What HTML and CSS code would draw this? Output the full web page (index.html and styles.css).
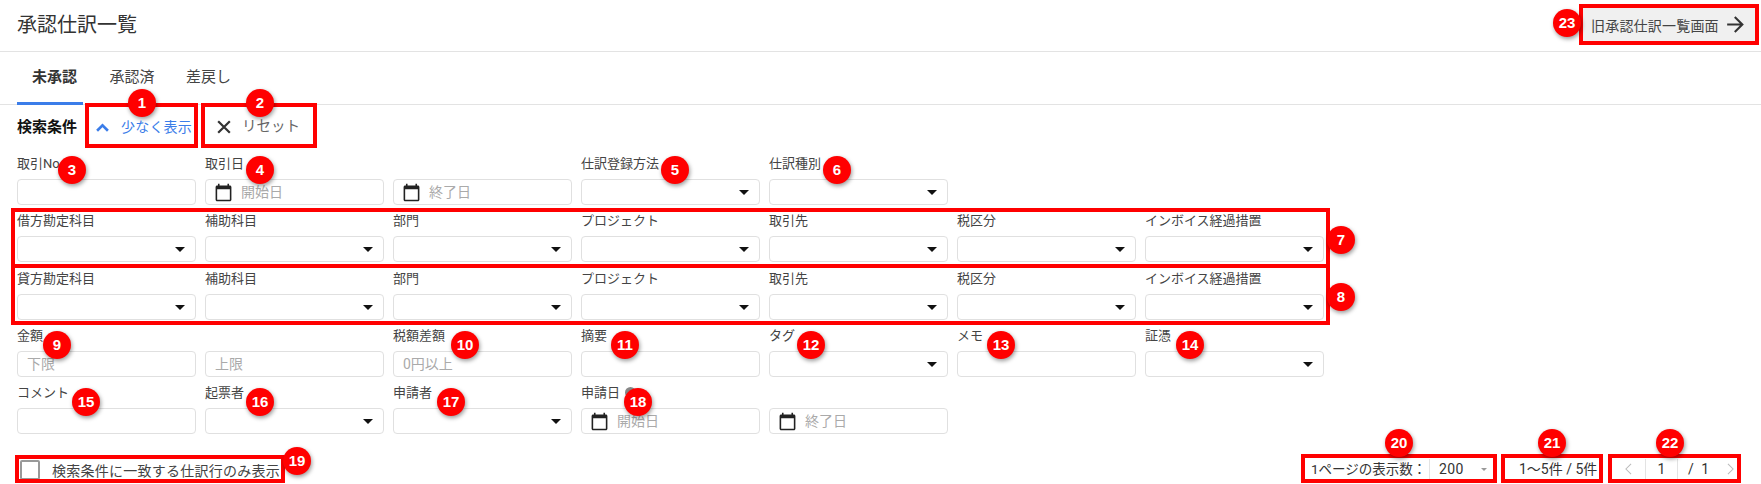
FILE: index.html
```html
<!DOCTYPE html>
<html lang="ja">
<head>
<meta charset="utf-8">
<title>承認仕訳一覧</title>
<link rel="stylesheet" href="styles.css">
</head>
<body>
<div class="page">
  <header class="top">
    <h1>承認仕訳一覧</h1>
    <button class="old-link">旧承認仕訳一覧画面
      <svg class="arrow" viewBox="0 0 24 24"><path d="M12 4l-1.41 1.41L16.17 11H4v2h12.17l-5.58 5.59L12 20l8-8z"/></svg>
    </button>
  </header>
  <nav class="tabs">
    <a class="tab active">未承認</a>
    <a class="tab">承認済</a>
    <a class="tab">差戻し</a>
  </nav>
  <div class="search-bar">
    <strong class="search-title">検索条件</strong>
    <a class="less"><svg class="chev" viewBox="0 0 12 8"><path d="M1 7l5-5 5 5" /></svg>少なく表示</a>
    <a class="reset"><svg class="cross" viewBox="0 0 12 12"><path d="M1 1l10 10M11 1L1 11" /></svg>リセット</a>
  </div>
  <div class="fields">
    <div class="field"><label>取引No</label><div class="ctl"></div></div>
    <div class="field"><label>取引日</label><div class="ctl date"><svg class="cal" viewBox="0 0 24 24"><path d="M20 3h-1V1h-2v2H7V1H5v2H4c-1.1 0-2 .9-2 2v16c0 1.1.9 2 2 2h16c1.1 0 2-.9 2-2V5c0-1.1-.9-2-2-2zm0 18H4V8h16v13z"/></svg><span class="ph">開始日</span></div></div>
    <div class="field"><label>&nbsp;</label><div class="ctl date"><svg class="cal" viewBox="0 0 24 24"><path d="M20 3h-1V1h-2v2H7V1H5v2H4c-1.1 0-2 .9-2 2v16c0 1.1.9 2 2 2h16c1.1 0 2-.9 2-2V5c0-1.1-.9-2-2-2zm0 18H4V8h16v13z"/></svg><span class="ph">終了日</span></div></div>
    <div class="field"><label>仕訳登録方法</label><div class="ctl sel"></div></div>
    <div class="field"><label>仕訳種別</label><div class="ctl sel"></div></div>
    <div class="field"></div>
    <div class="field"></div>

    <div class="field"><label>借方勘定科目</label><div class="ctl sel"></div></div>
    <div class="field"><label>補助科目</label><div class="ctl sel"></div></div>
    <div class="field"><label>部門</label><div class="ctl sel"></div></div>
    <div class="field"><label>プロジェクト</label><div class="ctl sel"></div></div>
    <div class="field"><label>取引先</label><div class="ctl sel"></div></div>
    <div class="field"><label>税区分</label><div class="ctl sel"></div></div>
    <div class="field"><label>インボイス経過措置</label><div class="ctl sel"></div></div>

    <div class="field"><label>貸方勘定科目</label><div class="ctl sel"></div></div>
    <div class="field"><label>補助科目</label><div class="ctl sel"></div></div>
    <div class="field"><label>部門</label><div class="ctl sel"></div></div>
    <div class="field"><label>プロジェクト</label><div class="ctl sel"></div></div>
    <div class="field"><label>取引先</label><div class="ctl sel"></div></div>
    <div class="field"><label>税区分</label><div class="ctl sel"></div></div>
    <div class="field"><label>インボイス経過措置</label><div class="ctl sel"></div></div>

    <div class="field"><label>金額</label><div class="ctl"><span class="ph text">下限</span></div></div>
    <div class="field"><label>&nbsp;</label><div class="ctl"><span class="ph text">上限</span></div></div>
    <div class="field"><label>税額差額</label><div class="ctl"><span class="ph text">0円以上</span></div></div>
    <div class="field"><label>摘要</label><div class="ctl"></div></div>
    <div class="field"><label>タグ</label><div class="ctl sel"></div></div>
    <div class="field"><label>メモ</label><div class="ctl"></div></div>
    <div class="field"><label>証憑</label><div class="ctl sel"></div></div>

    <div class="field"><label>コメント</label><div class="ctl"></div></div>
    <div class="field"><label>起票者</label><div class="ctl sel"></div></div>
    <div class="field"><label>申請者</label><div class="ctl sel"></div></div>
    <div class="field"><label>申請日<i class="help"></i></label><div class="ctl date"><svg class="cal" viewBox="0 0 24 24"><path d="M20 3h-1V1h-2v2H7V1H5v2H4c-1.1 0-2 .9-2 2v16c0 1.1.9 2 2 2h16c1.1 0 2-.9 2-2V5c0-1.1-.9-2-2-2zm0 18H4V8h16v13z"/></svg><span class="ph">開始日</span></div></div>
    <div class="field"><label>&nbsp;</label><div class="ctl date"><svg class="cal" viewBox="0 0 24 24"><path d="M20 3h-1V1h-2v2H7V1H5v2H4c-1.1 0-2 .9-2 2v16c0 1.1.9 2 2 2h16c1.1 0 2-.9 2-2V5c0-1.1-.9-2-2-2zm0 18H4V8h16v13z"/></svg><span class="ph">終了日</span></div></div>
  </div>
  <footer class="foot">
    <div class="check"><span class="box"></span>検索条件に一致する仕訳行のみ表示</div>
    <div class="pager">
      <span class="per">1ページの表示数：</span>
      <span class="per-sel">200<i class="mini"></i></span>
      <span class="count">1～5件 / 5件</span>
      <span class="nav">
        <svg class="ang" viewBox="0 0 8 14"><path d="M7 1L1 7l6 6"/></svg>
        <span class="cur">1</span>
        <span class="tot">/ 1</span>
        <svg class="ang" viewBox="0 0 8 14"><path d="M1 1l6 6-6 6"/></svg>
      </span>
    </div>
  </footer>

  <span class="rb r1"></span><span class="rb r2"></span><span class="rb r7"></span><span class="rb r8"></span>
  <span class="rb r19"></span><span class="rb r20"></span><span class="rb r21"></span><span class="rb r22"></span><span class="rb r23"></span>

  <b class="bd b1">1</b><b class="bd b2">2</b><b class="bd b3">3</b><b class="bd b4">4</b><b class="bd b5">5</b><b class="bd b6">6</b>
  <b class="bd b7">7</b><b class="bd b8">8</b><b class="bd b9">9</b><b class="bd b10">10</b><b class="bd b11">11</b><b class="bd b12">12</b>
  <b class="bd b13">13</b><b class="bd b14">14</b><b class="bd b15">15</b><b class="bd b16">16</b><b class="bd b17">17</b><b class="bd b18">18</b>
  <b class="bd b19">19</b><b class="bd b20">20</b><b class="bd b21">21</b><b class="bd b22">22</b><b class="bd b23">23</b>
</div>
</body>
</html>
```
FILE: styles.css
```css
* { box-sizing: border-box; }
html, body { margin: 0; padding: 0; background: #fff; }
body { font-family: Roboto, "Liberation Sans", "Noto Sans CJK JP", sans-serif; color: #333; overflow: hidden; }
.page { position: relative; width: 1761px; height: 484px; overflow: hidden; }

.top { height: 52px; border-bottom: 1px solid #e3e3e3; display: flex; align-items: center; justify-content: space-between; padding: 0 2px 4px 17px; }
.top h1 { margin: 0; font-size: 20px; font-weight: 400; color: #333; }
.old-link { width: 180px; height: 41px; margin-top: 2px; border: 0; background: #f0f0f0; color: #444; font: inherit; font-size: 14px; letter-spacing: .2px; display: flex; align-items: center; padding: 0 0 0 12px; gap: 4px; }
.arrow { width: 25px; height: 25px; fill: #333; flex: none; }

.tabs { height: 53px; border-bottom: 1px solid #e3e3e3; display: flex; gap: 11.5px; padding-left: 17px; }
.tab { height: 53px; padding: 0 5px 0 15px; font-size: 15px; line-height: 50px; color: #444; border-bottom: 3px solid transparent; }
.tab.active { font-weight: 700; color: #333; border-bottom-color: #3b7de9; width: 66px; }

.search-bar { height: 50px; display: flex; align-items: flex-start; padding: 11px 0 0 17px; }
.search-title { font-size: 15px; line-height: 22px; font-weight: 700; color: #111; width: 79px; }
.less { display: flex; align-items: center; font-size: 14px; line-height: 22px; color: #3b7de9; width: 122px; letter-spacing: .2px; }
.chev { width: 13px; height: 9px; margin-right: 12px; fill: none; stroke: #3b7de9; stroke-width: 2.4; }
.reset { display: flex; align-items: center; font-size: 14.5px; line-height: 22px; color: #666; margin-left: -1px; }
.cross { width: 14px; height: 14px; margin-right: 11px; fill: none; stroke: #333; stroke-width: 1.9; }

.fields { display: grid; grid-template-columns: repeat(7, 179px); column-gap: 9px; row-gap: 7.25px; padding-left: 17px; }
.field { height: 50px; }
.field label { display: block; height: 18px; margin-bottom: 6px; font-size: 13px; line-height: 18px; color: #444; white-space: nowrap; }
.ctl { height: 26px; border: 1px solid #e0e0e0; border-radius: 4px; display: flex; align-items: center; background: #fff; position: relative; }
.sel::after { content: ""; position: absolute; right: 10px; top: 10px; border-style: solid; border-width: 5px 5px 0; border-color: #111 transparent transparent; }
.date { padding-left: 8px; }
.cal { width: 19px; height: 19px; fill: #222; flex: none; margin-right: 8px; }
.ph { font-size: 14px; color: #aaa; line-height: 24px; }
.ph.text { margin-left: 9px; }
.help { display: inline-block; width: 11px; height: 11px; border-radius: 50%; background: #888; margin-left: 5px; vertical-align: -1px; }

.foot { display: flex; justify-content: space-between; align-items: center; height: 22px; margin-top: 25px; padding: 0 20px; }
.check { display: flex; align-items: center; font-size: 14px; letter-spacing: .25px; color: #444; }
.box { width: 20px; height: 20px; border: 2px solid #999; border-radius: 2px; margin-right: 12px; background: #fff; }
.pager { display: flex; align-items: center; font-size: 13.5px; line-height: 20px; color: #333; margin-bottom: 2px; }
.per { width: 119px; border-right: 1px solid #e3e3e3; white-space: nowrap; }
.per-sel { width: 74px; padding-left: 9px; display: flex; align-items: center; font-size: 14px; letter-spacing: .4px; }
.mini { margin-left: 17px; border-style: solid; border-width: 3px 3px 0; border-color: #999 transparent transparent; }
.count { width: 96px; white-space: nowrap; font-size: 14px; margin-left: 15px; }
.nav { display: flex; align-items: center; margin-left: 10px; width: 116px; }
.ang { width: 7px; height: 12px; fill: none; stroke: #bbb; stroke-width: 1.2; flex: none; }
.cur { width: 33px; margin-left: 13px; text-align: center; border-left: 1px solid #e3e3e3; border-right: 1px solid #e3e3e3; font-size: 14px; }
.tot { width: 49px; padding-left: 10px; font-size: 14px; word-spacing: 4px; }

.rb { position: absolute; border: 4px solid #f00; pointer-events: none; }
.r1 { left: 85px; top: 103px; width: 113px; height: 45px; }
.r2 { left: 201px; top: 103px; width: 116px; height: 45px; }
.r7 { left: 11px; top: 208px; width: 1319px; height: 60px; }
.r8 { left: 11px; top: 264px; width: 1319px; height: 61px; }
.r19 { left: 15px; top: 455px; width: 270px; height: 28px; }
.r20 { left: 1301px; top: 454px; width: 196px; height: 29px; }
.r21 { left: 1501px; top: 454px; width: 102px; height: 29px; }
.r22 { left: 1608px; top: 454px; width: 133px; height: 29px; }
.r23 { left: 1579px; top: 4px; width: 180px; height: 41px; }

.bd { position: absolute; width: 28px; height: 28px; margin: -14px 0 0 -14px; border-radius: 50%; background: #f00; color: #fff; font: 700 15px/28px "Liberation Sans", sans-serif; text-align: center; box-shadow: 1px 2px 4px rgba(0,0,0,.4); }
.b1 { left: 142px; top: 103px; }
.b2 { left: 260px; top: 103px; }
.b3 { left: 72px; top: 170px; }
.b4 { left: 260px; top: 170px; }
.b5 { left: 675px; top: 170px; }
.b6 { left: 837px; top: 170px; }
.b7 { left: 1341px; top: 240px; }
.b8 { left: 1341px; top: 297px; }
.b9 { left: 57px; top: 345px; }
.b10 { left: 465px; top: 345px; }
.b11 { left: 625px; top: 345px; }
.b12 { left: 811px; top: 345px; }
.b13 { left: 1001px; top: 345px; }
.b14 { left: 1190px; top: 345px; }
.b15 { left: 86px; top: 402px; }
.b16 { left: 260px; top: 402px; }
.b17 { left: 451px; top: 402px; }
.b18 { left: 638px; top: 402px; }
.b19 { left: 297px; top: 461px; }
.b20 { left: 1399px; top: 443px; }
.b21 { left: 1552px; top: 443px; }
.b22 { left: 1670px; top: 443px; }
.b23 { left: 1567px; top: 23px; }
```
